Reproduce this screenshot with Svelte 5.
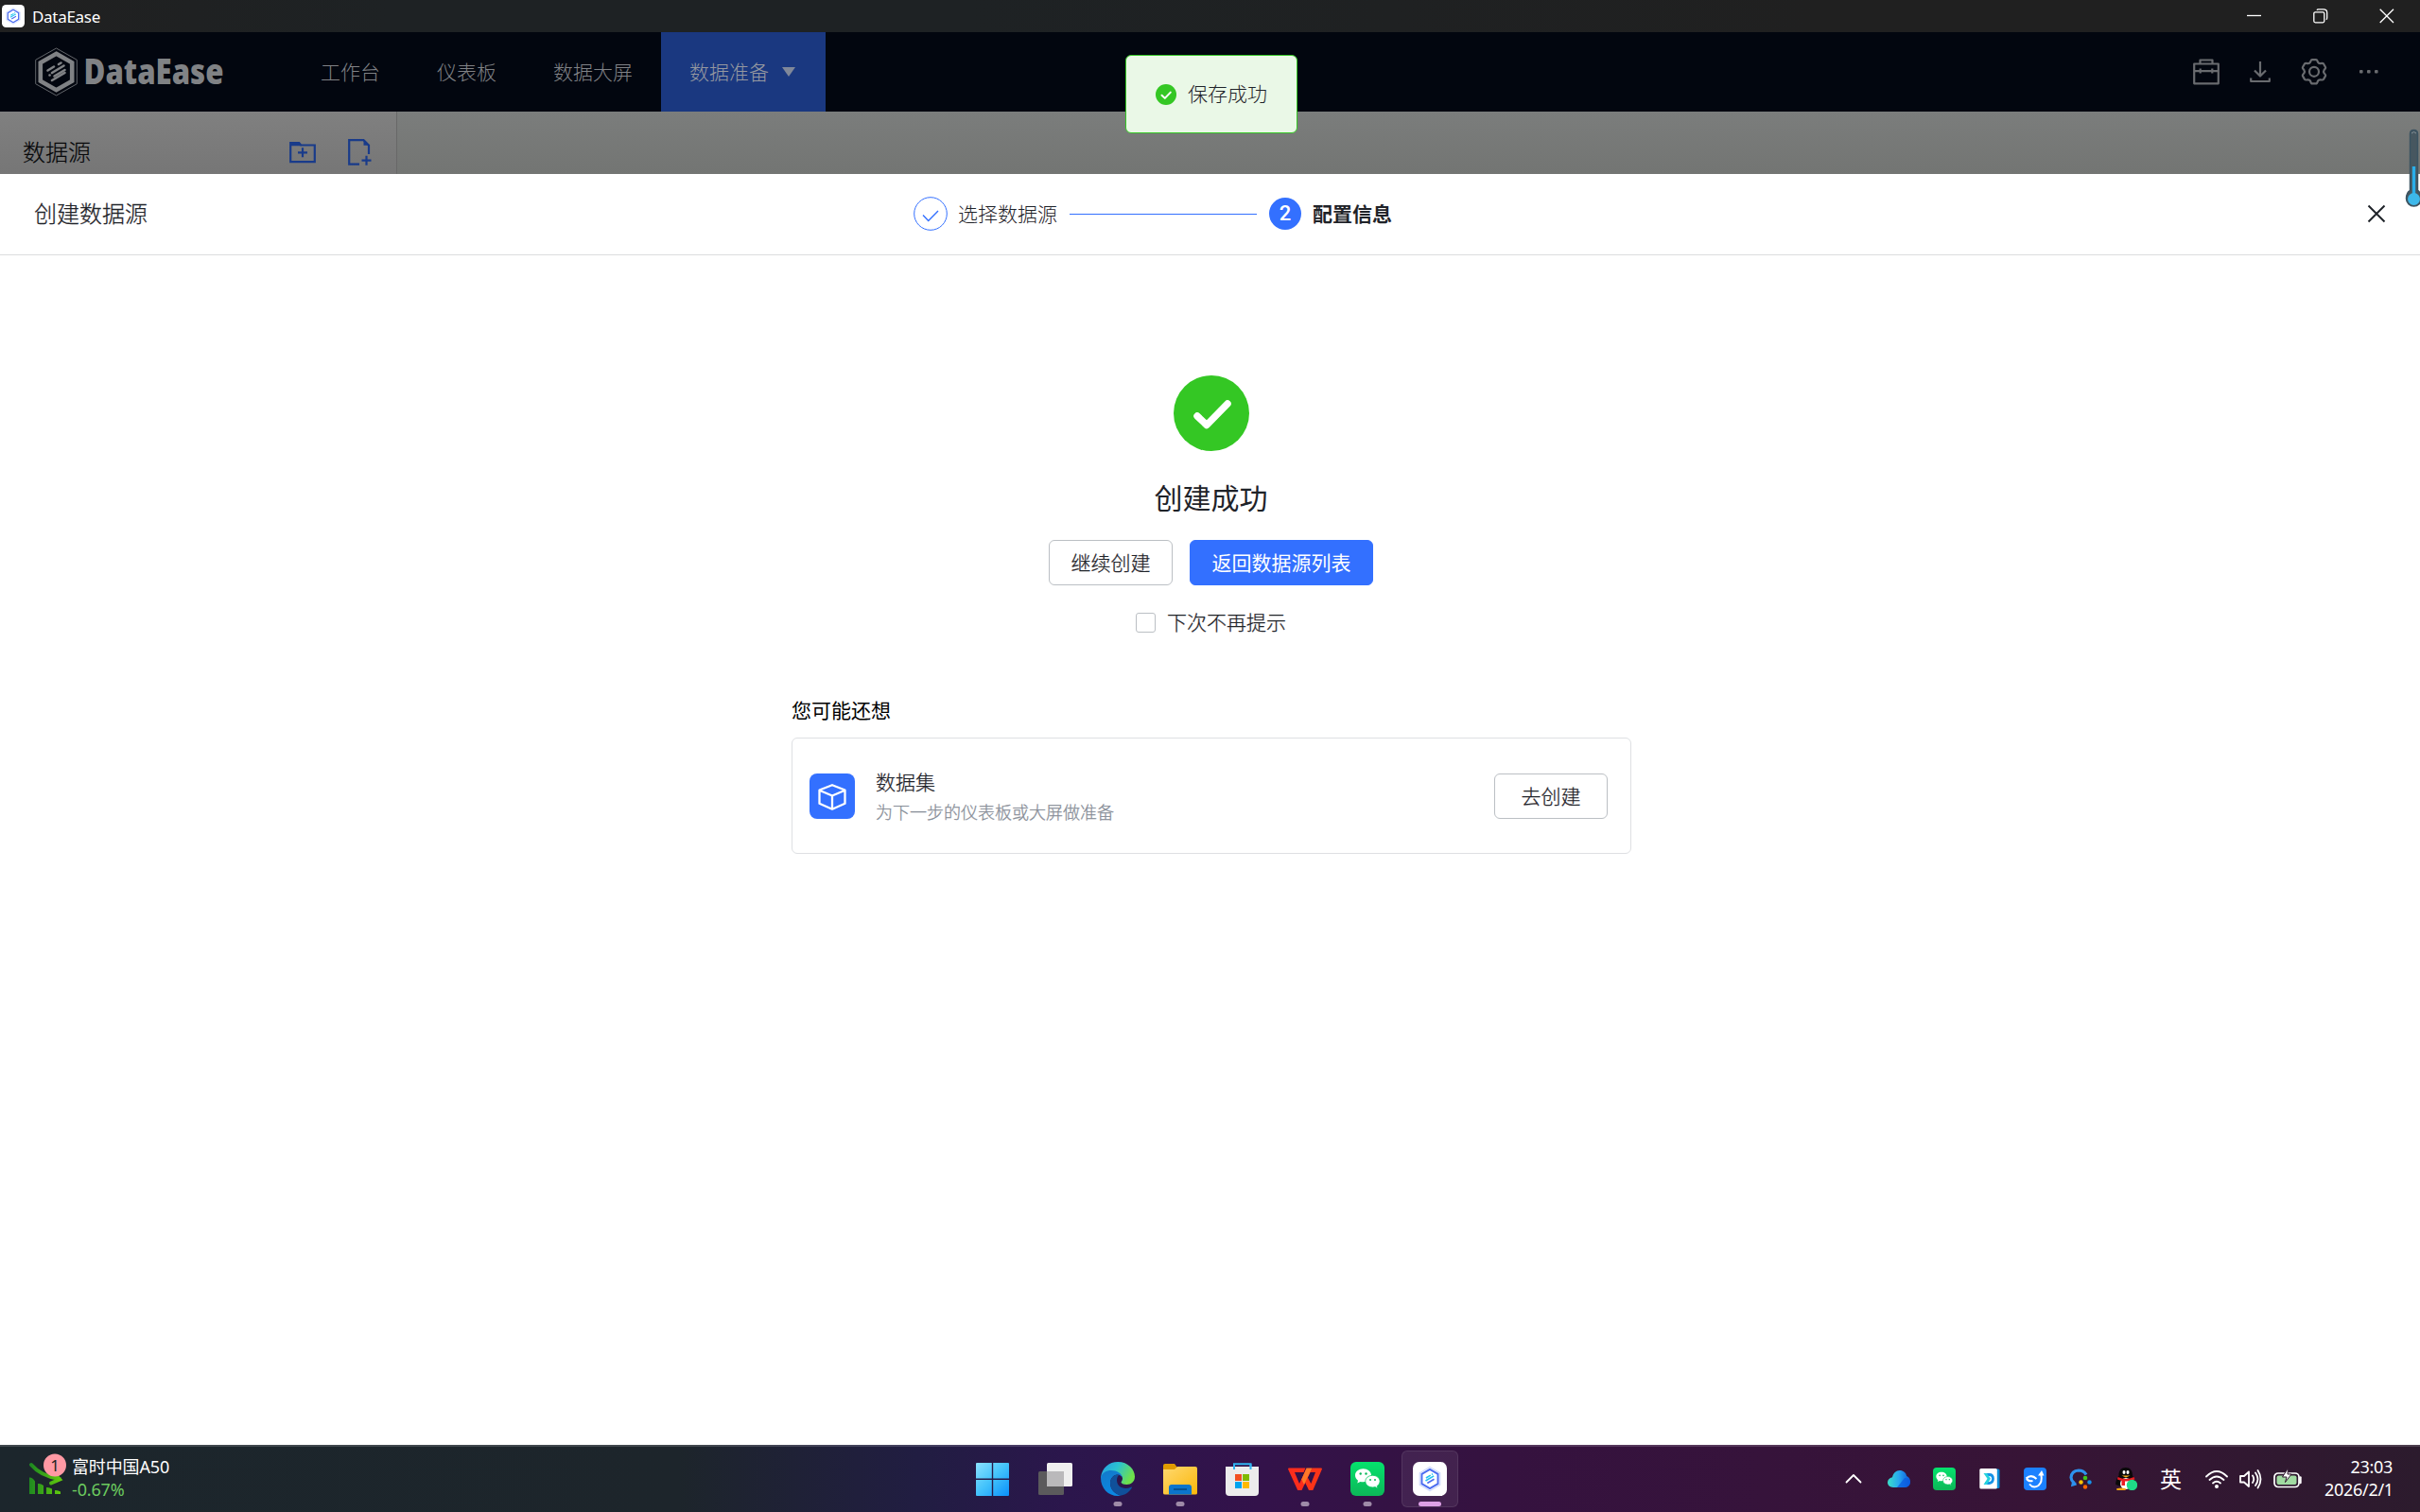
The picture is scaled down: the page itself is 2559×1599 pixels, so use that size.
<script lang="ts">
  interface NavItem {
    label: string;
    active?: boolean;
  }

  const navItems: NavItem[] = [
    { label: "工作台" },
    { label: "仪表板" },
    { label: "数据大屏" },
    { label: "数据准备", active: true },
  ];

  const apps = ["start", "taskview", "edge", "explorer", "store", "wps", "wechat", "dataease"];
  const running = ["edge", "explorer", "wps", "wechat"];

  let current = $state("dataease");
  let skipNext = $state(false);
</script>

{#snippet hexLogo()}
  <svg viewBox="0 0 24 24" class="fill">
    <rect width="24" height="24" rx="4.5" fill="#fff" />
    <path d="M12 3.6 19.2 7.8v8.4L12 20.4l-7.2-4.2V7.800z" fill="none" stroke="#c9d5fb" stroke-width=".7" />
    <path d="M12 5.300 17.700 8.600v6.800L12 18.700l-5.700-3.300V8.600z" fill="none" stroke="#4a6cf0" stroke-width="1.300" />
    <path d="m9.300 11.300 3.200-1.900m.8-.5.700-.4m-5 4.800 5.800-3.400" stroke="#22c3f0" stroke-width="1.100" />
    <path d="m10.200 15 4.800-2.800" stroke="#4a6cf0" stroke-width="1.100" />
  </svg>
{/snippet}

{#snippet wechat()}
  <svg viewBox="0 0 36 36" class="fill">
    <defs>
      <linearGradient id="wx" x2="0" y2="1">
        <stop stop-color="#05e26d" />
        <stop offset="1" stop-color="#0cb758" />
      </linearGradient>
    </defs>
    <rect width="36" height="36" rx="6" fill="url(#wx)" />
    <path d="M13.500 7.300C8.800 7.300 5 10.400 5 14.300c0 2.200 1.200 4.100 3 5.400l-.7 2.900 3.200-1.700c1 .3 2 .4 3 .4 4.700 0 8.500-3.100 8.500-7s-3.800-7-8.500-7z" fill="#fff" />
    <path d="M23.500 14.300c-4.300 0-7.700 2.800-7.700 6.300s3.400 6.300 7.700 6.300c1 0 1.800-.1 2.600-.4l2.700 1.500-.6-2.500c1.800-1.200 2.900-2.900 2.900-4.900 0-3.500-3.400-6.300-7.600-6.300z" fill="#fff" stroke="#0bcc62" stroke-width=".8" />
    <g fill="#0bb85a">
      <circle cx="10.700" cy="12.500" r="1.200" /><circle cx="16.500" cy="12.500" r="1.200" />
      <circle cx="21" cy="19" r="1" /><circle cx="26" cy="19" r="1" />
    </g>
  </svg>
{/snippet}

<div class="screen">
  <div class="titlebar">
    <span class="titlebar-icon">{@render hexLogo()}</span>
    <span class="titlebar-name">DataEase</span>
    <div class="window-controls">
      <svg width="16" height="16" viewBox="0 0 16 16"><path d="M0 7.500h15" /></svg>
      <svg width="16" height="16" viewBox="0 0 16 16">
        <rect x=".8" y="3.800" width="11" height="11" rx="1.500" />
        <path d="M4 1.700Q4.300.8 5.500.8H11q3.700 0 3.700 3.700V10q0 1.400-1 1.700" />
      </svg>
      <svg width="16" height="16" viewBox="0 0 16 16"><path d="m.7.7 14.300 14.300M15 .7.700 15" /></svg>
    </div>
  </div>

  <header class="app-header">
    <svg class="logo" width="220" height="64" viewBox="0 -6 220 64">
      <path d="M22.500 1 44.300 13.300v25.400L22.500 51 .7 38.700V13.300z" fill="none" stroke="#62656a" stroke-width="1" />
      <path d="M22.500 6.800 39.200 16.300v19.400L22.500 45.200 5.800 35.700V16.300z" fill="none" stroke="#808285" stroke-width="4.600" />
      <g stroke="#808285" stroke-width="2.600" stroke-linecap="round">
        <path d="m13.500 24.500 6.500-4M25 18l2.500-1.500M18 27l12.500-7.500M15.500 29.500h.1M20.500 30.500l11-6.500M18 35l13.500-8" />
      </g>
      <text x="51.500" y="38.500" textLength="148" lengthAdjust="spacingAndGlyphs">DataEase</text>
    </svg>
    <nav>
      {#each navItems as item}
        <span class="nav-item" class:nav-item--active={item.active}>
          {item.label}
          {#if item.active}<i class="caret"></i>{/if}
        </span>
      {/each}
    </nav>
    <div class="header-tools">
      <svg width="28" height="28" viewBox="0 0 28 28">
        <path d="M1.200 5.500h25.600v20.800H1.200zM7.500 5V1.500h13V5M1.500 13.200h25M7.700 10.500v5M20.300 10.500v5" />
      </svg>
      <svg width="22" height="24" viewBox="0 0 22 24">
        <path d="M11 1v15M5 10.500l6 6 6-6M1.200 18.500V22h19.600v-3.500" />
      </svg>
      <svg width="28" height="28" viewBox="0 0 28 28">
        <path d="M10 3.800Q10.800 1.200 12 1.200h4q1.200 0 2 2.600.8 1.500 2.800 1.300 2.500-.6 3.200.4l2 3.500q.6 1.100-1.300 2.900-1.300 1.800 0 3.600 1.900 1.800 1.300 2.900l-2 3.500q-.7 1-3.200.4-2-.2-2.800 1.300-.8 2.800-2 2.800h-4q-1.200 0-2-2.800-.8-1.500-2.800-1.300-2.500.6-3.200-.4l-2-3.500q-.6-1.100 1.300-2.900 1.300-1.800 0-3.600Q1.400 10.100 2 9l2-3.500q.7-1 3.200-.4Q9.200 5.300 10 3.800z" />
        <circle cx="14" cy="13.800" r="5" />
      </svg>
      <svg width="20" height="6" viewBox="0 0 20 6" class="dots">
        <rect y="1" width="3.600" height="3.600" rx="1" /><rect x="8" y="1" width="3.600" height="3.600" rx="1" /><rect x="16" y="1" width="3.600" height="3.600" rx="1" />
      </svg>
    </div>
  </header>

  <div class="backdrop">
    <div class="side">
      <span>数据源</span>
      <svg class="new-folder" width="28" height="24" viewBox="0 0 28 24">
        <path d="M1.200 22.200V2h9l2 2.500h14.600v17.700zM9 12.300h10M14 7.300v10" />
        <path d="M1 1.200h9.500l2 4H1z" class="solid" />
      </svg>
      <svg class="new-file" width="25" height="28" viewBox="0 0 25 28">
        <path d="M12 26.700H1.200V1.200h15.300l5.500 5.500V16M14.500 22.700h10M19.500 17.700v10" />
        <path d="M16.500.5v6.200H23z" class="solid" />
      </svg>
    </div>
    <div class="main-pane"></div>
  </div>

  <section class="drawer">
    <header class="drawer-header">
      <h1>创建数据源</h1>
      <div class="steps">
        <svg width="36" height="36" viewBox="0 0 36 36">
          <circle cx="18" cy="18" r="17.300" fill="none" stroke="#3370ff" />
          <path d="m10 19.500 5.700 6L26 15" fill="none" stroke="#3370ff" stroke-width="1.400" />
        </svg>
        <span class="step-label">选择数据源</span>
        <i class="step-line"></i>
        <b class="step-number">2</b>
        <span class="step-label step-label--current">配置信息</span>
      </div>
      <svg class="close" width="20" height="20" viewBox="0 0 20 20"><path d="m1.500 1.500 17 17m0-17-17 17" /></svg>
    </header>

    <div class="result">
      <svg width="80" height="80" viewBox="0 0 80 80">
        <circle cx="40" cy="40" r="40" fill="#34c724" />
        <path d="m25 43 10 9.500L57 30" fill="none" stroke="#fff" stroke-width="7.500" stroke-linecap="round" stroke-linejoin="round" />
      </svg>
      <h2>创建成功</h2>
      <div class="actions">
        <button>继续创建</button>
        <button class="primary">返回数据源列表</button>
      </div>
      <label class="skip">
        <input type="checkbox" bind:checked={skipNext} />
        <span>下次不再提示</span>
      </label>
    </div>

    <div class="suggest">
      <h3>您可能还想</h3>
      <div class="card">
        <svg width="48" height="48" viewBox="0 0 48 48">
          <rect width="48" height="48" rx="8" fill="#3370ff" />
          <path d="M24 12.200 37.500 17.500v14.300L24 37.700l-13.500-5.900V17.500zM11 18l13 5.500L37 18M24 23.500v13.500" fill="none" stroke="#fff" stroke-width="2.300" stroke-linejoin="round" />
        </svg>
        <div class="card-text">
          <strong>数据集</strong>
          <span>为下一步的仪表板或大屏做准备</span>
        </div>
        <button>去创建</button>
      </div>
    </div>
  </section>

  <footer class="taskbar">
    <div class="widget">
      <svg width="42" height="46" viewBox="0 0 42 46">
        <defs>
          <linearGradient id="stock" x2="1">
            <stop stop-color="#1f8a20" />
            <stop offset="1" stop-color="#5fc90e" />
          </linearGradient>
        </defs>
        <path d="M3 12Q13 24 33 27M24 31.500l9-4-5-5" fill="none" stroke="url(#stock)" stroke-width="4" stroke-linecap="round" />
        <path d="M1 25.500q3-.5 6 4V43H1zM10 32q3-.5 6 2v9h-6zM19 36q3-.5 6 1.500V43h-6zM28 39q3-.5 6 1.500V43h-6z" fill="url(#stock)" />
        <circle cx="28" cy="12.500" r="12" fill="#ff99a4" />
        <text x="28" y="18.500" text-anchor="middle">1</text>
      </svg>
      <div class="widget-text">
        <span>富时中国A50</span>
        <span class="down">-0.67%</span>
      </div>
    </div>

    <div class="apps">
      {#each apps as app}
        <button class="app" class:app--current={app === current} aria-label={app} onclick={() => (current = app)}>
          {#if app === "start"}
            <svg viewBox="0 0 36 36" class="fill">
              <defs>
                <linearGradient id="win" x2="1" y2="1">
                  <stop stop-color="#8be2ff" />
                  <stop offset=".5" stop-color="#42c2fb" />
                  <stop offset="1" stop-color="#0a91fb" />
                </linearGradient>
              </defs>
              <path d="M0 2q0-1 1-1h15.800v16.500H0zM18.200 1H34q1 0 1 1v15.500H18.200zM0 19h16.800v17H1q-1 0-1-1zM18.200 19H35v16q0 1-1 1H18.200z" fill="url(#win)" />
            </svg>
          {:else if app === "taskview"}
            <svg viewBox="0 0 36 36" class="fill">
              <rect x="9" y="1" width="27" height="25" rx="1.500" fill="#efefef" />
              <rect y="10" width="27" height="25" rx="1.500" fill="#5b5a5c" />
              <path d="M9 10h18v16H9z" fill="#bab9bb" />
            </svg>
          {:else if app === "edge"}
            <svg viewBox="0 0 36 36" class="fill">
              <defs>
                <linearGradient id="edge-a" x2="1" y2=".4">
                  <stop stop-color="#249be5" />
                  <stop offset=".5" stop-color="#2bc3d0" />
                  <stop offset="1" stop-color="#6ee04b" />
                </linearGradient>
                <linearGradient id="edge-b" x2=".3" y2="1">
                  <stop stop-color="#1379c9" />
                  <stop offset="1" stop-color="#0b88e2" />
                </linearGradient>
              </defs>
              <path d="M0 17C1 6 9 0 18 0c11 0 18 8 18 15.500 0 5.500-4 8.500-8.500 8.500-4 0-6-1.500-6-2.500 0-.8 1.500-1.500 1.500-4 0-3-3-5.500-7-5.500z" fill="url(#edge-a)" />
              <path d="M0 17C1 11.500 6 9 11 9c6 0 11.500 3 12 8-1-2-3-3.500-5.500-3.500-4 0-7.500 4-7.500 9 0 7 5.500 12 11.500 13-1.200.3-2.400.5-3.500.5C8 36 0 28 0 17z" fill="url(#edge-b)" />
              <path d="M17.500 13.500C13 14 10 18 10 22.500c0 7 5.500 12 11.500 13 5-.9 9-4 11.300-8 .4-.8-.2-1.200-1-.8-7 3.300-14.800-.2-14.800-7.200 0-2.500.8-4.500 2.500-5.700-.6-.3-1.300-.4-2-.3z" fill="#10509a" />
            </svg>
          {:else if app === "explorer"}
            <svg viewBox="0 0 36 36" class="fill">
              <defs>
                <linearGradient id="folder" x2="1" y2="1">
                  <stop stop-color="#ffd970" />
                  <stop offset="1" stop-color="#fbb70a" />
                </linearGradient>
              </defs>
              <path d="M0 4q0-2 2-2h10l3 4v6H0z" fill="#e09b00" />
              <path d="M0 8h12l3-3h19q2 0 2 2v26q0 1.500-2 1.500H2Q0 34.500 0 33z" fill="url(#folder)" />
              <path d="M6 34.500V27q0-3 3-3h18q3 0 3 3v7.500z" fill="#0b75cc" />
              <path d="M11 29h14" stroke="#064f8e" stroke-width="1.800" />
            </svg>
          {:else if app === "store"}
            <svg viewBox="0 0 36 36" class="fill">
              <path d="M9 6V2.300h17.500V6" fill="none" stroke="#31b4f0" stroke-width="2" />
              <path d="M0 5h35v27q0 4-4 4H4q-4 0-4-4z" fill="#ececec" />
              <path d="M9 2.300V8M26.500 2.300V8" stroke="#31b4f0" stroke-width="2" />
              <path d="M10 13h7v7h-7z" fill="#f25022" /><path d="M18 13h7v7h-7z" fill="#7fba00" />
              <path d="M10 21h7v7h-7z" fill="#00a4ef" /><path d="M18 21h7v7h-7z" fill="#ffb900" />
            </svg>
          {:else if app === "wps"}
            <svg viewBox="0 0 36 36" class="fill">
              <path d="M1 6.500h17.500l-2 4.500H7l5 12L19 8h6L14.500 30h-4.300L.2 8q-.5-1.500.8-1.500z" fill="#fb2d1c" />
              <path d="M25.500 6.500H35q1.300 0 .8 1.500L26.300 30H22l-4.300-9 2.600-5.500L24.300 23 29 11h-5.500z" fill="#fb3418" />
              <path d="M19.500 6.500h6L17 24l-2.700-5.500z" fill="#ff7827" />
            </svg>
          {:else if app === "wechat"}
            {@render wechat()}
          {:else}
            {@render hexLogo()}
          {/if}
          {#if running.includes(app) || app === current}<i class="indicator"></i>{/if}
        </button>
      {/each}
    </div>

    <div class="tray">
      <svg width="24" height="24" viewBox="0 0 24 24"><path d="m4.500 15.500 7.500-7.500 7.500 7.500" class="line" /></svg>
      <svg width="24" height="24" viewBox="0 0 24 24">
        <defs>
          <linearGradient id="cloud" x2="1">
            <stop stop-color="#3be0c9" />
            <stop offset=".5" stop-color="#27a7f0" />
            <stop offset="1" stop-color="#0a55d8" />
          </linearGradient>
        </defs>
        <path d="M6 21c-3.500 0-6-2.300-6-5.200 0-2.800 2-5 5-5.500C6 6 9 3 12.700 3c4 0 6.800 2.500 7.500 6 2.500 1 3.800 3.200 3.800 5.800 0 3.500-2.600 6.200-6 6.200z" fill="url(#cloud)" />
        <path d="m10 21 8-10c3 0 6 1.500 6 4.500 0 3-2.500 5.500-6 5.500z" fill="#0b5be0" opacity=".75" />
      </svg>
      <span class="tray-icon">{@render wechat()}</span>
      <svg width="24" height="24" viewBox="0 0 24 24">
        <rect x="4" y="1.500" width="18.500" height="20.500" rx="1.500" fill="#0c8ed8" />
        <rect x="1.300" y="1" width="18.500" height="21.500" rx="1.500" fill="#fff" />
        <path d="M8 7.500h3.500q4 0 4 4.300t-4 4.700H7" fill="none" stroke="#1593e8" stroke-width="2.800" />
        <path d="M5.500 6H9l4 5.800L9 18H5.500l4-6.200z" fill="#26d3dd" />
        <path d="M5.500 9v5.500l2.500-2.700z" fill="#fff" />
      </svg>
      <svg width="24" height="24" viewBox="0 0 24 24">
        <rect width="24" height="24" rx="4" fill="#1b81ff" />
        <path d="M2.500 11.500Q8 6.500 13.500 12M3 11.500q1.500 3.500 6.500 2.500M6 17.500q4 5 9.500 1.500Q20 15.500 18.300 7" fill="none" stroke="#fff" stroke-width="2" />
        <path d="m15 8.500 4-5.500 2.500 5.500z" fill="#fff" />
      </svg>
      <svg width="24" height="24" viewBox="0 0 24 24">
        <path d="M18 7.500Q15.500 3 10 3 2.500 3.500 2 10.500q.2 3 2.500 5L4 18l3.500-1" fill="none" stroke="#2d91ee" stroke-width="3.200" />
        <path d="m17 11-4 4.500 4 4 4-4z" fill="none" stroke="#3e2c22" />
        <circle cx="17" cy="11" r="2.300" fill="#40c51c" /><circle cx="21.500" cy="15.500" r="2.200" fill="#1592e9" />
        <circle cx="17" cy="20.500" r="2.200" fill="#fb6500" /><circle cx="12.500" cy="15.500" r="2.200" fill="#ffc300" />
      </svg>
      <svg width="24" height="24" viewBox="0 0 24 24">
        <path d="M4.500 8.500C4.500 3 7 0 11.700 0S19 3 19 8.500c2.500 4 3.500 7 3.300 9.500l-3 1-7.600 3-7.700-3-2.800-1c-.2-3 .8-6 3.300-9.500z" fill="#090909" />
        <ellipse cx="12" cy="17" rx="6" ry="6" fill="#fff" />
        <ellipse cx="10" cy="5" rx="1.500" ry="2" fill="#fff" /><ellipse cx="14" cy="5" rx="1.500" ry="2" fill="#fff" />
        <path d="M7.500 8.500h9l-4.500 2z" fill="#fbb01a" />
        <path d="M3.500 10q8.500 4 17 0l1 2.500Q16 15 11 14.500V19H7.500v-5L3 12.500z" fill="#ea1b22" />
        <ellipse cx="7" cy="23" rx="5" ry="1.500" fill="#f6a512" />
        <circle cx="18.500" cy="18.500" r="5.700" fill="#1fd987" />
      </svg>
      <span class="ime">英</span>
      <div class="system">
        <svg width="24" height="24" viewBox="0 0 24 24">
          <path d="M1 9.500q11-11 22 0M4.500 13q7.500-7 15 0M8 16.500q4-3.500 8 0" class="line" />
          <circle cx="12" cy="20" r="2" fill="#fff" />
        </svg>
        <svg width="24" height="24" viewBox="0 0 24 24">
          <path d="M1 9v6.500h4l5 4.500V4.500L5 9zM14 8.500q2.500 3.700 0 7.500M17 5.500q5 6.700 0 13.500M19.500 3q6 9.200 0 18.500" class="line" />
        </svg>
        <svg width="30" height="24" viewBox="0 0 30 24">
          <rect x="1" y="6" width="26" height="14.500" rx="4" fill="none" stroke="#fff" stroke-width="1.700" />
          <rect x="3.500" y="8.500" width="21" height="9.500" rx="2" fill="#a1dba2" />
          <path d="M28.500 10.500v5.500" stroke="#fff" stroke-width="2.400" stroke-linecap="round" />
          <path d="m15.500.5-6 9.500H14l-1.500 5.500L19 7h-4z" fill="#fff" stroke="#30182f" />
        </svg>
      </div>
      <div class="clock">
        <span>23:03</span>
        <span>2026/2/1</span>
      </div>
    </div>
  </footer>

  <div class="toast">
    <svg width="22" height="22" viewBox="0 0 22 22">
      <circle cx="11" cy="11" r="11" fill="#34c724" />
      <path d="m6.500 11.700 3.300 3.200 6-6.300" fill="none" stroke="#fff" stroke-width="2" stroke-linecap="round" stroke-linejoin="round" />
    </svg>
    <span>保存成功</span>
  </div>

  <svg class="thermometer" width="18" height="88" viewBox="0 0 18 88">
    <path d="M5.500 5.500q0-4 4-4t4 4v60q4 2.500 4 8.500a8 8 0 0 1-16 0q0-6 4-8.500z" fill="#475760" stroke="#3b5361" stroke-width="1.500" />
    <path d="M7 5q2.500-3 5 0" fill="none" stroke="#83929a" />
    <path d="M9.500 40v32" stroke="#2aaeea" stroke-width="3.400" />
    <circle cx="9.500" cy="74.500" r="6.500" fill="#3db8ea" />
  </svg>
</div>

<style>
  :global(body) {
    margin: 0;
    overflow: hidden;
  }

  .screen {
    position: relative;
    display: flex;
    flex-direction: column;
    width: 2559px;
    height: 1599px;
    background: #fff;
    color: #1f2329;
    font-family: "Noto Sans CJK SC", sans-serif;
    font-size: 21px;
    font-weight: 300;
  }

  svg {
    display: block;
    flex: none;
  }

  .fill {
    width: 100%;
    height: 100%;
  }

  h1,
  h2,
  h3 {
    margin: 0;
  }

  button {
    height: 48px;
    box-sizing: border-box;
    padding: 0 22.5px 1px;
    border: 1px solid #bbbfc4;
    border-radius: 6px;
    background: #fff;
    color: #1f2329;
    font: inherit;
    line-height: 1;
  }

  .primary {
    border-color: #3370ff;
    background: #3370ff;
    color: #fff;
    font-weight: 400;
    -webkit-text-stroke: 0;
  }

  .titlebar {
    display: flex;
    align-items: center;
    height: 34px;
    background: linear-gradient(90deg, #202020, #1e2224 16%, #1e2224 40%, #202020 75%);
    color: #fff;
  }

  .titlebar-icon {
    width: 24px;
    height: 24px;
    margin-left: 2px;
  }

  .titlebar-name {
    margin-left: 8px;
    font: 400 17px "Noto Sans", sans-serif;
    letter-spacing: -0.3px;
  }

  .window-controls {
    display: flex;
    gap: 54px;
    margin-left: auto;
    margin-right: 27px;
  }

  .window-controls svg {
    fill: none;
    stroke: #fff;
    stroke-width: 1.300;
  }

  .app-header {
    display: flex;
    align-items: center;
    height: 84px;
    background: #02060f;
  }

  .logo {
    margin-left: 37px;
  }

  .logo text {
    fill: #808285;
    font: 900 37px "Noto Sans", sans-serif;
  }

  nav {
    display: flex;
    align-self: stretch;
    margin-left: 52px;
  }

  .nav-item {
    display: flex;
    align-items: center;
    padding: 0 30px 2px;
    color: #808286;
    line-height: 1;
  }

  .nav-item--active {
    padding-right: 32px;
    background: #1a3880;
    color: #9598a0;
  }

  .caret {
    margin-top: 2px;
    margin-left: 14px;
    border: 7.500px solid transparent;
    border-top: 10px solid #80889a;
    border-bottom: 0;
  }

  .header-tools {
    display: flex;
    align-items: center;
    gap: 32px;
    margin-left: auto;
    margin-right: 44px;
  }

  .header-tools svg {
    fill: none;
    stroke: #696b6f;
    stroke-width: 2.200;
    stroke-linejoin: round;
  }

  .header-tools .dots {
    fill: #696b6f;
    stroke: none;
    margin-left: 2px;
  }

  .backdrop {
    display: flex;
    height: 66px;
    background: linear-gradient(#808080, #767676);
  }

  .side {
    display: flex;
    align-items: center;
    box-sizing: border-box;
    width: 420px;
    padding: 20px 26px 0 24px;
    border-right: 1px solid #686868;
    color: #07080a;
    font-size: 24px;
    line-height: 1;
  }

  .side span {
    padding-bottom: 2px;
    -webkit-text-stroke: 0.2px;
  }

  .side svg {
    fill: none;
    stroke: #193b8a;
    stroke-width: 2.200;
  }

  .side .solid {
    fill: #193b8a;
    stroke: none;
  }

  .new-folder {
    margin-left: auto;
    margin-right: 34px;
  }

  .main-pane {
    flex: 1;
    background: linear-gradient(#7b7d7c, #737573);
  }

  .drawer {
    display: flex;
    flex: 1;
    flex-direction: column;
    align-items: center;
    background: #fff;
    -webkit-text-stroke: 0.25px;
  }

  .drawer-header {
    display: grid;
    grid-template-columns: 966px 1fr auto;
    align-items: center;
    box-sizing: border-box;
    width: 100%;
    height: 86px;
    padding: 0 36px 1px 0;
    border-bottom: 1px solid #dcddde;
  }

  h1 {
    padding: 0 0 3px 36px;
    font-size: 24px;
    font-weight: 300;
    line-height: 1;
  }

  .steps {
    display: flex;
    align-items: center;
  }

  .step-label {
    margin-left: 11px;
    padding-bottom: 1px;
    line-height: 1;
    -webkit-text-stroke: 0;
  }

  .step-label--current {
    margin-left: 12px;
    font-weight: 700;
  }

  .step-line {
    width: 198px;
    margin: 0 13px;
    border-top: 1px solid #3370ff;
  }

  .step-number {
    width: 34px;
    height: 34px;
    border-radius: 50%;
    background: #3370ff;
    color: #fff;
    font: 500 22px/34px Roboto, sans-serif;
    text-align: center;
    -webkit-text-stroke: 0;
  }

  .close {
    stroke: #1f2329;
    stroke-width: 2;
  }

  .result {
    display: flex;
    flex-direction: column;
    align-items: center;
    margin: 127px 0 0 2px;
  }

  h2 {
    margin-top: 33px;
    font-size: 30px;
    font-weight: 400;
    line-height: 30px;
    -webkit-text-stroke: 0;
  }

  .actions {
    display: flex;
    gap: 18px;
    margin-top: 31px;
  }

  .skip {
    display: flex;
    align-items: center;
    gap: 12px;
    margin-top: 26px;
    line-height: 28px;
  }

  .skip span {
    margin-top: -2px;
  }

  .skip input {
    width: 21px;
    height: 21px;
    margin: 0;
    box-sizing: border-box;
    appearance: none;
    border: 1px solid #bbbfc4;
    border-radius: 3px;
  }

  .suggest {
    width: 888px;
    margin: 67px 0 0 3px;
  }

  h3 {
    color: #000;
    font-size: 21px;
    font-weight: 400;
    line-height: 24px;
    -webkit-text-stroke: 0;
  }

  .card {
    display: flex;
    align-items: center;
    box-sizing: border-box;
    height: 123px;
    margin-top: 18px;
    padding: 0 24px 0 18px;
    border: 1px solid #dee0e3;
    border-radius: 6px;
  }

  .card-text {
    display: flex;
    flex-direction: column;
    gap: 12px;
    margin-left: 22px;
    padding-bottom: 1px;
    line-height: 1;
  }

  .card-text strong {
    font-weight: 300;
  }

  .card-text span {
    color: #878d97;
    font-size: 18px;
  }

  .card button {
    width: 120px;
    margin-left: auto;
  }

  .taskbar {
    display: grid;
    grid-template-columns: 1016px auto 1fr;
    align-items: center;
    box-sizing: border-box;
    height: 71px;
    padding-bottom: 1px;
    border-top: 2px solid rgba(255, 255, 255, 0.16);
    background: linear-gradient(90deg, #1c262c, #1d252b 28%, #211d42 38%, #2b164c 44%, #33124a 52%, #35123f 62%, #371436 84%, #2c1b2d) border-box;
    color: #fff;
    font-family: "Noto Sans", "Noto Sans CJK SC", sans-serif;
    font-size: 18px;
    font-weight: 400;
  }

  .widget {
    display: flex;
    align-items: center;
    gap: 4px;
    padding-left: 30px;
  }

  .widget svg {
    margin-bottom: 8px;
  }

  .widget text {
    fill: #222;
    font: 17px "Noto Sans", sans-serif;
  }

  .widget-text {
    display: flex;
    flex-direction: column;
    padding-bottom: 2px;
    font-size: 18px;
    letter-spacing: -0.15px;
    line-height: 24px;
  }

  .down {
    color: #6ccb5f;
  }

  .apps {
    display: flex;
    gap: 6px;
    padding-left: 4px;
  }

  .app {
    position: relative;
    width: 60px;
    height: 60px;
    padding: 11px;
    border: 1px solid transparent;
    background: transparent;
  }

  .app--current {
    border-color: rgba(255, 255, 255, 0.09);
    background: rgba(255, 255, 255, 0.07);
  }

  .indicator {
    position: absolute;
    bottom: 0;
    left: 50%;
    width: 9px;
    height: 5px;
    border-radius: 3px;
    background: #9f8ba8;
    transform: translateX(-50%);
  }

  .app--current .indicator {
    width: 24px;
    background: #dda0e6;
  }

  .tray {
    display: flex;
    align-items: center;
    justify-content: flex-end;
    gap: 24px;
    padding-right: 29px;
  }

  .tray-icon {
    width: 24px;
    height: 24px;
  }

  .line {
    fill: none;
    stroke: #fff;
    stroke-width: 1.800;
    stroke-linecap: round;
    stroke-linejoin: round;
  }

  .ime {
    width: 24px;
    padding-bottom: 1px;
    font-size: 23px;
    line-height: 24px;
  }

  .system {
    display: flex;
    gap: 12px;
  }

  .clock {
    display: flex;
    flex-direction: column;
    width: 72px;
    padding-bottom: 2px;
    font-size: 18px;
    letter-spacing: -0.3px;
    line-height: 24px;
    text-align: right;
    white-space: nowrap;
  }

  .toast {
    position: absolute;
    top: 58px;
    left: 1190px;
    display: flex;
    align-items: center;
    gap: 12px;
    box-sizing: border-box;
    width: 182px;
    height: 83px;
    padding-left: 31px;
    border: 1px solid #34c724;
    border-radius: 6px;
    background: #eaf8e7;
    line-height: 1;
  }

  .toast span {
    padding-bottom: 2px;
  }

  .thermometer {
    position: absolute;
    top: 136px;
    right: -2px;
  }
</style>
